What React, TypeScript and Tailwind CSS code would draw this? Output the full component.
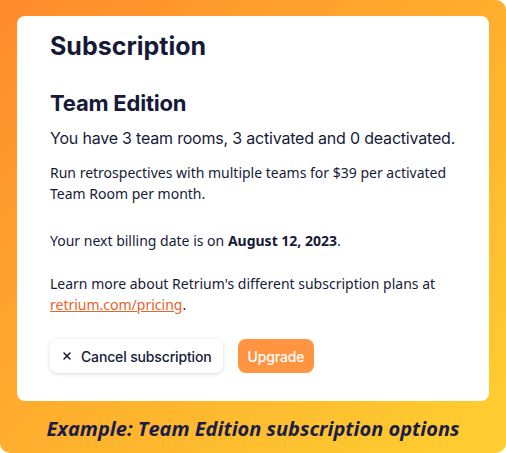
import { X } from "lucide-react"

export default function App() {
  return (
    <div className="h-[453px] w-[506px] bg-white">
      <div className="flex h-full w-full flex-col rounded-[10px] rounded-tl-none bg-gradient-to-br from-[#ff8a2b] to-[#ffd030] px-[17px] pt-[16px]">
        <div
          className="h-[385px] rounded-[8px] bg-white pl-[33px] pr-[20px] pt-[14px] text-[#161a38]"
          style={{ fontFamily: '"Noto Sans", sans-serif' }}
        >
          <h2
            className="text-[25px] font-bold leading-[32px]"
            style={{ fontFamily: 'Inter, "Noto Sans", sans-serif' }}
          >
            Subscription
          </h2>
          <h3
            className="mt-[27px] text-[22px] font-bold leading-[28px] tracking-[-0.2px]"
            style={{ fontFamily: 'Inter, "Noto Sans", sans-serif' }}
          >
            Team Edition
          </h3>
          <p
            className="mt-[9px] text-[16px] leading-[24px] tracking-[-0.2px]"
            style={{ fontFamily: 'Inter, "Noto Sans", sans-serif' }}
          >
            You have 3 team rooms, 3 activated and 0 deactivated.
          </p>
          <p className="mt-[12px] text-[14px] leading-[21px]">
            Run retrospectives with multiple teams for $39 per activated Team
            Room per month.
          </p>
          <p className="mt-[26px] text-[14px] leading-[21px]">
            Your next billing date is on <b>August 12, 2023</b>.
          </p>
          <p className="mt-[22px] text-[14px] leading-[21px]">
            Learn more about Retrium's different subscription plans at{" "}
            <a href="#" className="text-[#e8622b] underline">
              retrium.com/pricing
            </a>
            .
          </p>
          <div
            className="mt-[24px] flex items-center gap-[15px]"
            style={{ fontFamily: 'Inter, "Noto Sans", sans-serif' }}
          >
            <button
              type="button"
              className="flex h-[34px] items-center gap-[8px] rounded-[8px] bg-white px-[11px] text-[14px] font-medium tracking-[-0.15px] text-[#161a38] shadow-[0_1px_4px_rgba(0,0,0,0.15)]"
            >
              <X size={12} strokeWidth={3} />
              Cancel subscription
            </button>
            <button
              type="button"
              className="flex h-[34px] items-center rounded-[8px] bg-[#ff9441] px-[10px] text-[14px] font-medium tracking-[-0.15px] text-white"
            >
              Upgrade
            </button>
          </div>
        </div>
        <div
          className="flex flex-1 items-center justify-center pt-[4px] text-[20px] font-bold italic text-[#1a1d4a]"
          style={{ fontFamily: '"Open Sans", sans-serif' }}
        >
          Example: Team Edition subscription options
        </div>
      </div>
    </div>
  )
}
